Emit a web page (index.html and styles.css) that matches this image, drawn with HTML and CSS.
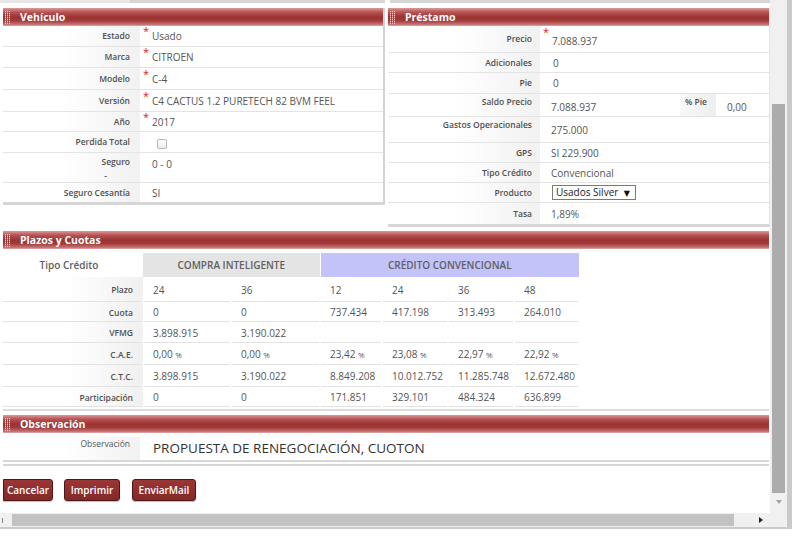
FILE: index.html
```html
<!DOCTYPE html>
<html lang="es">
<head>
<meta charset="utf-8">
<title>Préstamo</title>
<link rel="stylesheet" href="styles.css">
</head>
<body>
<div class="frame">
  <div class="frame-main">
    <div class="viewport">
      <div class="top-strip"><span class="ts-left"></span><span class="ts-right"></span></div>

      <div class="panels">
        <section class="panel veh">
          <header class="bar"><span class="grip"></span>Vehículo</header>
          <div class="row r21"><div class="lbl">Estado</div><div class="val"><span class="req">*</span>Usado</div></div>
          <div class="row r21"><div class="lbl">Marca</div><div class="val"><span class="req">*</span>CITROEN</div></div>
          <div class="row r22"><div class="lbl">Modelo</div><div class="val"><span class="req">*</span>C-4</div></div>
          <div class="row r22"><div class="lbl">Versión</div><div class="val"><span class="req">*</span>C4 CACTUS 1.2 PURETECH 82 BVM FEEL</div></div>
          <div class="row r20"><div class="lbl">Año</div><div class="val"><span class="req">*</span>2017</div></div>
          <div class="row r21"><div class="lbl">Perdida Total</div><div class="val"><span class="chk"></span></div></div>
          <div class="row r30 top"><div class="lbl">Seguro<span class="dash">-</span></div><div class="val pad">0 - 0</div></div>
          <div class="row r19 last"><div class="lbl">Seguro Cesantía</div><div class="val pad">SI</div></div>
        </section>

        <section class="panel pres">
          <header class="bar"><span class="grip"></span>Préstamo</header>
          <div class="row r27 low"><div class="lbl">Precio</div><div class="val"><span class="req">*</span>7.088.937</div></div>
          <div class="row r20"><div class="lbl">Adicionales</div><div class="val pad2">0</div></div>
          <div class="row r21"><div class="lbl">Pie</div><div class="val pad2">0</div></div>
          <div class="row r23 top"><div class="lbl">Saldo Precio</div><div class="val pad1 drop">7.088.937</div><div class="lbl sub">% Pie</div><div class="val sub-val drop">0,00</div></div>
          <div class="row r26 top"><div class="lbl">Gastos Operacionales</div><div class="val pad1 drop">275.000</div></div>
          <div class="row r20"><div class="lbl">GPS</div><div class="val pad1">SI 229.900</div></div>
          <div class="row r20"><div class="lbl">Tipo Crédito</div><div class="val pad1">Convencional</div></div>
          <div class="row r20"><div class="lbl">Producto</div><div class="val"><span class="select">Usados Silver<span class="caret">▼</span></span></div></div>
          <div class="row r21 last"><div class="lbl">Tasa</div><div class="val pad1">1,89%</div></div>
        </section>
      </div>

      <section class="block plazos">
        <header class="bar"><span class="grip"></span>Plazos y Cuotas</header>
        <table class="cuotas">
          <colgroup>
            <col class="c-lbl"><col class="c1"><col class="c2"><col class="c3"><col class="c4"><col class="c5"><col class="c6">
          </colgroup>
          <thead>
            <tr>
              <th class="tipo">Tipo Crédito</th>
              <th class="grp-ci" colspan="2">COMPRA INTELIGENTE</th>
              <th class="grp-cc" colspan="4">CRÉDITO CONVENCIONAL</th>
            </tr>
          </thead>
          <tbody>
            <tr class="plazo"><th>Plazo</th><td>24</td><td>36</td><td>12</td><td>24</td><td>36</td><td>48</td></tr>
            <tr class="t20"><th>Cuota</th><td>0</td><td>0</td><td>737.434</td><td>417.198</td><td>313.493</td><td>264.010</td></tr>
            <tr class="t21"><th>VFMG</th><td>3.898.915</td><td>3.190.022</td><td></td><td></td><td></td><td></td></tr>
            <tr class="t22"><th>C.A.E.</th><td>0,00 <small>%</small></td><td>0,00 <small>%</small></td><td>23,42 <small>%</small></td><td>23,08 <small>%</small></td><td>22,97 <small>%</small></td><td>22,92 <small>%</small></td></tr>
            <tr class="t22"><th>C.T.C.</th><td>3.898.915</td><td>3.190.022</td><td>8.849.208</td><td>10.012.752</td><td>11.285.748</td><td>12.672.480</td></tr>
            <tr class="t20"><th>Participación</th><td>0</td><td>0</td><td>171.851</td><td>329.101</td><td>484.324</td><td>636.899</td></tr>
          </tbody>
        </table>
      </section>

      <section class="block obs">
        <header class="bar"><span class="grip"></span>Observación</header>
        <div class="obs-row"><div class="lbl">Observación</div><div class="obs-val">PROPUESTA DE RENEGOCIACIÓN, CUOTON</div></div>
      </section>

      <div class="actions">
        <button class="btn b-cancel" type="button">Cancelar</button>
        <button class="btn b-print" type="button">Imprimir</button>
        <button class="btn b-mail" type="button">EnviarMail</button>
      </div>
    </div>
    <div class="vscroll"><div class="vthumb"></div><div class="varrow"></div></div>
  </div>
  <div class="hscroll">
    <div class="harrow-l"></div>
    <div class="hthumb"></div>
    <div class="hspace"><span class="harrow-r"></span></div>
    <div class="corner"></div>
  </div>
</div>
</body>
</html>
```

FILE: styles.css
```css
* { box-sizing: border-box; }

body {
  margin: 0;
  background: #fff;
  font-family: "Open Sans", "DejaVu Sans", sans-serif;
  color: #555;
}

.frame {
  width: 792px;
  border-right: 5px solid #cacaca;
  border-bottom: 2px solid #cacaca;
}

.frame-main {
  display: flex;
  height: 513px;
}

.viewport {
  width: 770px;
  overflow: hidden;
}

/* top strip: bottom edges of panels above */
.top-strip {
  display: flex;
  gap: 5px;
  height: 3px;
}
.ts-left {
  width: 385px;
  background: linear-gradient(to right, #e6e6e6 0 130px, #d6d6d6 130px);
}
.ts-right {
  width: 380px;
  background: #d6d6d6;
}

/* section header bar */
.bar {
  height: 18px;
  display: flex;
  align-items: center;
  padding-left: 2px;
  background: linear-gradient(to bottom, #dc9a9a 0%, #b95555 22%, #9c3333 50%, #a23a3a 70%, #c77474 92%, #e0b0b0 100%);
  color: #fff;
  font-size: 10.5px;
  font-weight: 700;
  line-height: 18px;
}
.grip {
  width: 5px;
  height: 13px;
  margin-right: 10px;
  background:
    repeating-linear-gradient(to bottom, transparent 0 1px, rgba(160, 56, 56, 0.55) 1px 2px),
    repeating-linear-gradient(to right, #f0c8c8 0 1px, transparent 1px 2px);
}

/* top panels */
.panels {
  display: flex;
  align-items: flex-start;
  gap: 3px;
  margin: 5px 0 0 3px;
}
.panel {
  width: 382px;
  border-right: 2px solid #d2d2d2;
  border-bottom: 3px solid #d6d6d6;
}
.pres { width: 382px; border-right: 1px solid #e4e4e4; }

.row {
  display: flex;
  align-items: center;
  border-bottom: 1px solid #e4e4e4;
}
.row.last { border-bottom: 0; }
.r19 { height: 19px; }
.r20 { height: 20px; }
.r21 { height: 21px; }
.r22 { height: 22px; }
.r23 { height: 23px; }
.r26 { height: 26px; }
.r27 { height: 27px; }
.r30 { height: 30px; }

.lbl {
  align-self: stretch;
  display: flex;
  flex-direction: column;
  align-items: flex-end;
  justify-content: center;
  width: 137px;
  flex: none;
  padding-right: 10px;
  background: linear-gradient(to right, #ffffff 45%, #f1f1f1);
  font-size: 8.5px;
  font-weight: 600;
  color: #505050;
  line-height: 12px;
}
.pres .lbl { width: 152px; padding-right: 8px; }

.val {
  flex: 1;
  padding-left: 3px;
  font-size: 10px;
  line-height: 14px;
  color: #555;
  white-space: nowrap;
}
.val.pad { padding-left: 12px; }
.val.pad1 { padding-left: 11px; }
.val.pad2 { padding-left: 13px; }

.req {
  display: inline-block;
  width: 9px;
  color: #e02020;
  font-size: 11px;
  line-height: 8px;
  vertical-align: top;
  margin-top: -2px;
}

.row.low .val { padding-top: 3px; }
.row.low .req { margin-top: -6px; }

.row.top { align-items: flex-start; }
.row.top .lbl { justify-content: flex-start; padding-top: 2px; }
.row.top .val { padding-top: 4px; }
.row.top .val.drop { padding-top: 6px; }
.veh .row.top .lbl { padding-top: 3px; }

.dash {
  display: block;
  padding-right: 23px;
  margin-top: 2px;
}

.chk {
  display: inline-block;
  width: 10px;
  height: 10px;
  margin-left: 14px;
  margin-top: 2px;
  border: 1px solid #b7b7b7;
  border-radius: 2px;
  background: linear-gradient(#ffffff, #ececec);
  vertical-align: middle;
}

.lbl.sub {
  width: 36px;
  padding-right: 9px;
  background: linear-gradient(to right, #f8f8f8, #eeeeee);
}
.val.sub-val {
  flex: none;
  width: 53px;
  padding-left: 11px;
}

.select {
  display: inline-flex;
  align-items: center;
  justify-content: space-between;
  width: 84px;
  height: 15px;
  margin-left: 9px;
  padding: 0 5px 0 3px;
  border: 1px solid #7a7a7a;
  background: #fff;
  color: #222;
  font-size: 10px;
  line-height: 13px;
}
.caret { font-size: 8px; color: #111; }

/* plazos y cuotas */
.block { margin-left: 3px; width: 766px; }
.plazos {
  margin-top: 4px;
  padding-bottom: 2px;
  border-bottom: 2px solid #dcdcdc;
}

.cuotas {
  margin-top: 4px;
  border-collapse: collapse;
  table-layout: fixed;
  width: 576px;
}
.c-lbl { width: 140px; }
.c1 { width: 88px; }
.c2 { width: 89px; }
.c3 { width: 62px; }
.c4 { width: 66px; }
.c5 { width: 66px; }
.c6 { width: 65px; }

.cuotas thead th {
  height: 24px;
  padding: 0;
  font-size: 10px;
  font-weight: 600;
  color: #606060;
  text-align: center;
  vertical-align: middle;
}
.cuotas thead th.tipo { padding-right: 8px; }
.grp-ci { background: #e4e4e4; border-right: 1px solid #fff; }
.grp-cc { background: #c3c3fa; }

.cuotas tbody th {
  padding: 0 10px 0 0;
  text-align: right;
  font-size: 8.5px;
  font-weight: 600;
  color: #505050;
  background:
    linear-gradient(#e2e2e2, #e2e2e2) no-repeat left bottom / calc(100% - 1px) 1px,
    linear-gradient(to right, #ffffff 45%, #f0f0f0);
  vertical-align: middle;
}
.cuotas tbody td {
  padding: 0 0 0 10px;
  font-size: 10px;
  color: #555;
  white-space: nowrap;
  vertical-align: middle;
  background: linear-gradient(#e2e2e2, #e2e2e2) no-repeat center bottom / calc(100% - 2px) 1px;
}
.cuotas small { font-size: 8px; }

.plazo { height: 25px; }
.plazo th { vertical-align: top; padding-top: 7px; }
.plazo td { padding-top: 5px; }
.t20 { height: 20px; }
.t21 { height: 21px; }
.t22 { height: 22px; }

/* observación */
.obs { margin-top: 4px; }
.obs-row {
  display: flex;
  margin-top: 4px;
  height: 29px;
  border-bottom: 6px double #d6d6d6;
}
.obs-row .lbl {
  width: 137px;
  justify-content: flex-start;
  padding-top: 1px;
  font-weight: 400;
  color: #555;
}
.obs-val {
  padding: 2px 0 0 13px;
  font-size: 13.5px;
  line-height: 19px;
  color: #333;
}

/* buttons */
.actions {
  display: flex;
  gap: 12px;
  margin: 13px 0 0 3px;
}
.btn {
  height: 22px;
  padding: 0;
  border: 1px solid #4f1717;
  border-radius: 3px;
  background: linear-gradient(#9a3636, #852828);
  box-shadow: 0 1px 1px rgba(0, 0, 0, 0.25);
  color: #fff;
  font-family: "Open Sans", "DejaVu Sans", sans-serif;
  font-size: 10px;
  font-weight: 600;
  line-height: 20px;
}
.b-cancel { width: 50px; border-top-left-radius: 0; border-bottom-left-radius: 0; margin-right: -1px; }
.b-print { width: 56px; }
.b-mail { width: 64px; }

/* vertical scrollbar */
.vscroll {
  width: 17px;
  display: flex;
  flex-direction: column;
  align-items: center;
  padding-top: 104px;
  background: #f0f0f0;
}
.vthumb {
  width: 13px;
  height: 389px;
  background: #acacac;
}
.varrow {
  margin-top: 7px;
  width: 0;
  height: 0;
  border-left: 3.5px solid transparent;
  border-right: 3.5px solid transparent;
  border-top: 4px solid #a3a3a3;
}

/* horizontal scrollbar */
.hscroll {
  display: flex;
  height: 14px;
  background: #f0f0f0;
}
.harrow-l {
  width: 12px;
  position: relative;
}
.harrow-l::before {
  content: "";
  position: absolute;
  left: 2px;
  top: 5px;
  width: 1px;
  height: 5px;
  background: #8a8a8a;
}
.hthumb {
  width: 722px;
  margin: 1px 0;
  background: #c2c2c2;
}
.hspace {
  width: 36px;
  display: flex;
  align-items: center;
  padding-left: 25px;
}
.harrow-r {
  width: 0;
  height: 0;
  border-top: 3.5px solid transparent;
  border-bottom: 3.5px solid transparent;
  border-left: 4px solid #222;
}
.corner {
  width: 17px;
  background: #f0f0f0;
}
```
